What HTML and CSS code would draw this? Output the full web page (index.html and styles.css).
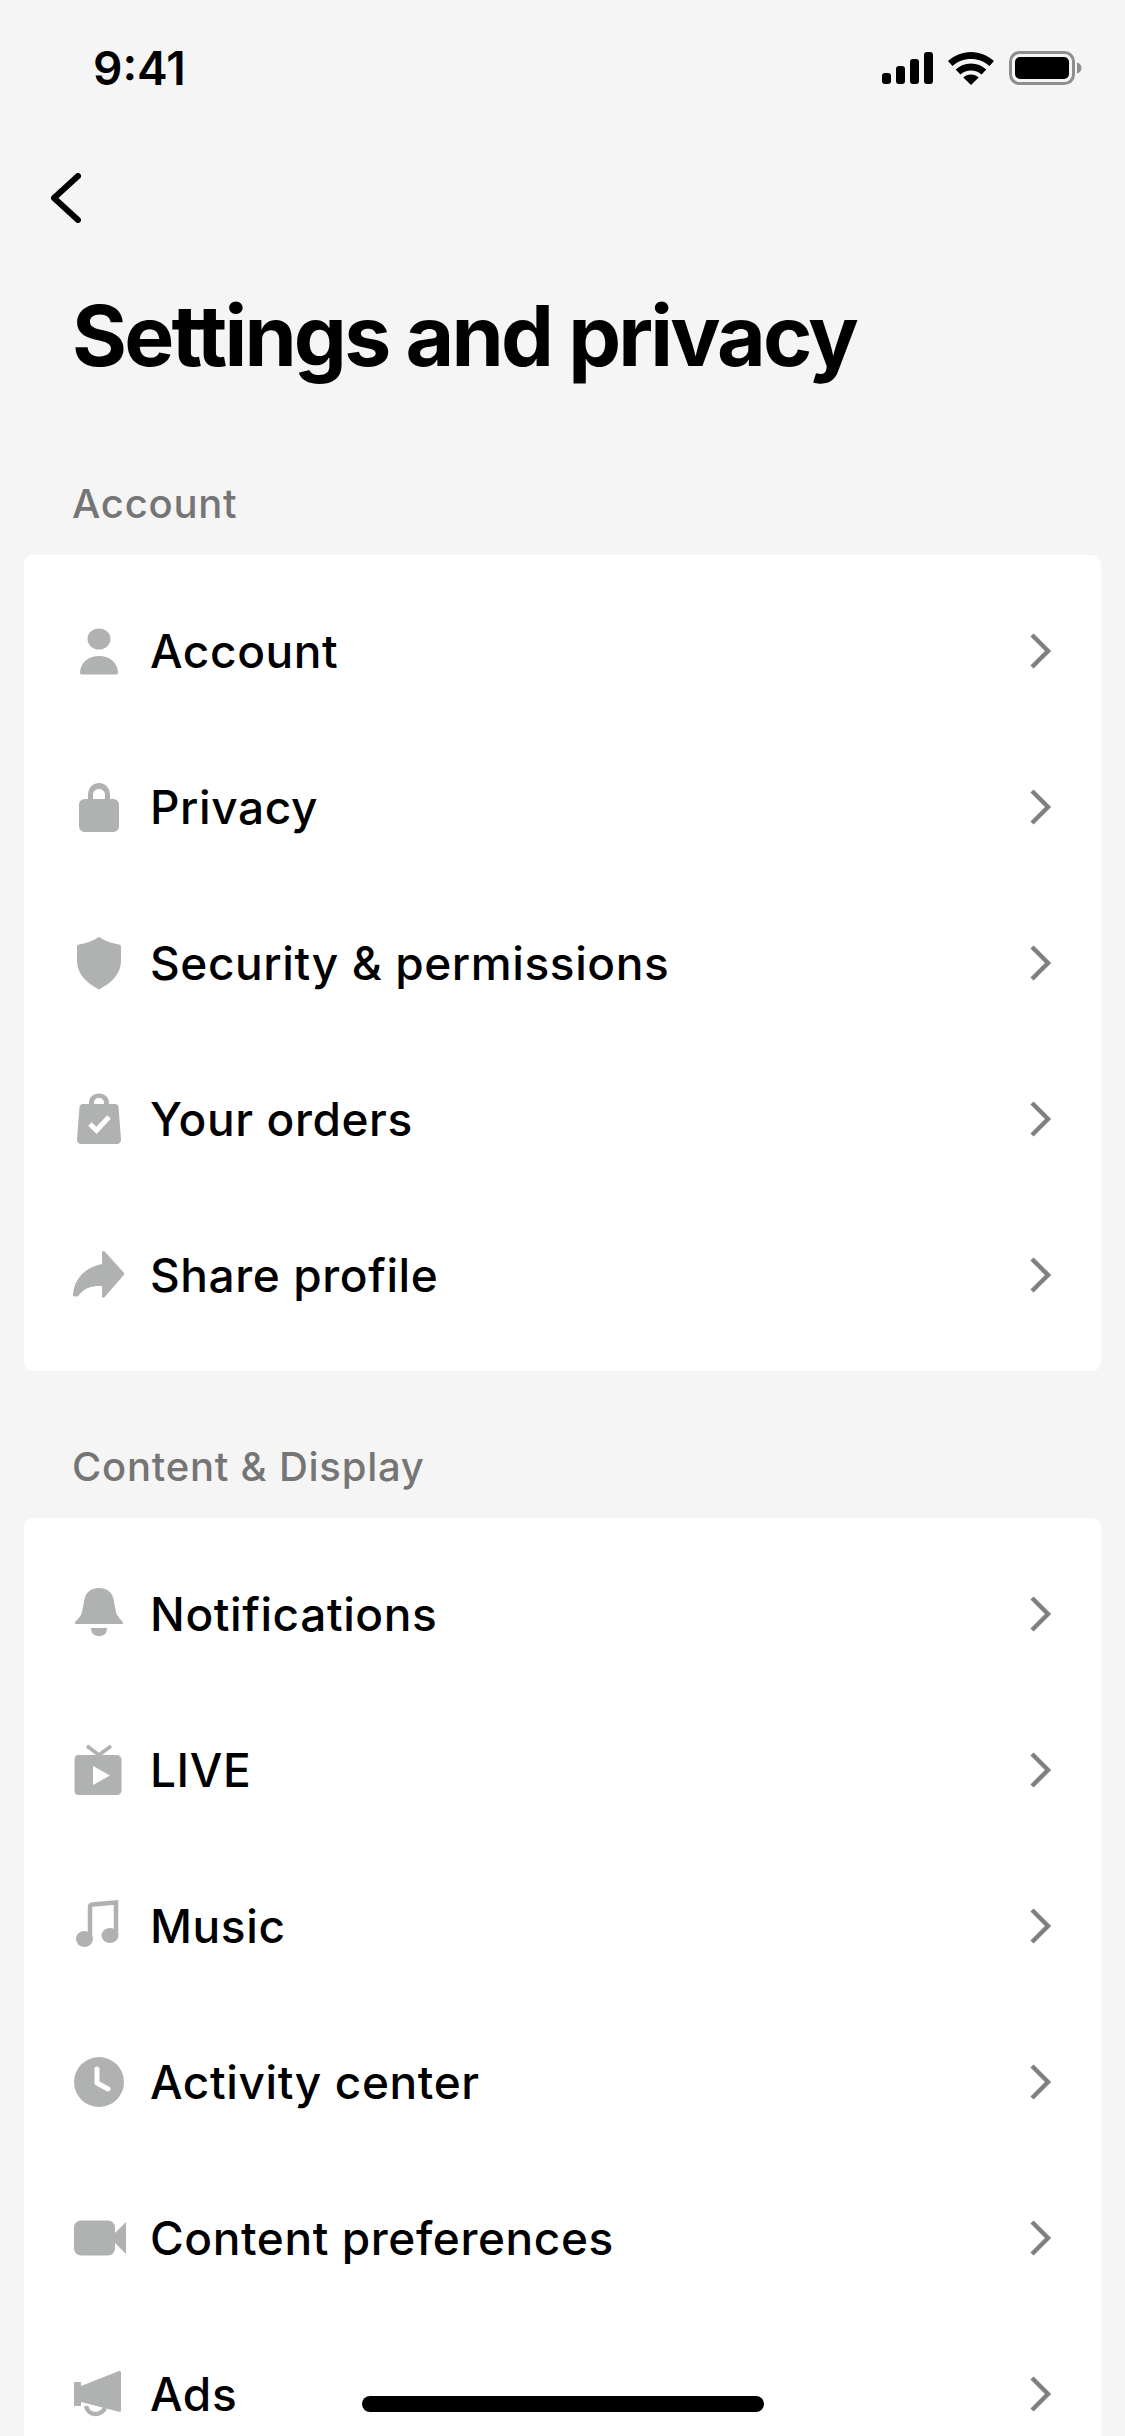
FILE: index.html
```html
<!DOCTYPE html>
<html lang="en">
<head>
<meta charset="utf-8">
<title>Settings and privacy</title>
<link rel="stylesheet" href="styles.css">
</head>
<body>
<div class="screen">
  <header class="status">
    <span class="time">9:41</span>
    <div class="status-icons">
      <svg class="sig" viewBox="0 0 51 32"><rect x="0" y="21" width="9" height="11" rx="3"/><rect x="14" y="14" width="9" height="18" rx="3"/><rect x="28" y="7" width="9" height="25" rx="3"/><rect x="42" y="0" width="9" height="32" rx="3"/></svg>
      <svg class="wifi" viewBox="0 0 46 33"><path d="M23 0C14 0 6.500 3.500 0 9l4.500 5C9.500 9.500 16 7 23 7s13.500 2.500 18.500 7l4.500-5C39.500 3.500 32 0 23 0z"/><path d="M23 11.500c-6 0-11 2.200-15.300 6l4.700 5c3-2.500 6.500-4 10.600-4s7.600 1.500 10.600 4l4.700-5c-4.300-3.800-9.300-6-15.300-6z"/><path d="M23 22.500c-3 0-5.600 1-7.700 2.900L23 33l7.700-7.600c-2.100-1.900-4.700-2.900-7.700-2.900z"/></svg>
      <svg class="batt" viewBox="0 0 73 34"><rect x="1.500" y="1.500" width="63" height="31" rx="9" fill="none" stroke="#8e8e8e" stroke-width="3"/><rect x="6" y="6" width="54" height="22" rx="5"/><path d="M68 11.500c2.800.8 4.500 3 4.500 5.500s-1.700 4.700-4.500 5.500z" fill="#8e8e8e"/></svg>
    </div>
  </header>

  <nav class="nav">
    <svg class="back" viewBox="0 0 32 50"><path d="M29 3 5 25l24 22" fill="none" stroke="#000" stroke-width="6" stroke-linecap="round" stroke-linejoin="round"/></svg>
  </nav>

  <h1 class="title">Settings and privacy</h1>

  <h2 class="section-label">Account</h2>
  <section class="card">
    <div class="row">
      <svg class="ico" viewBox="0 0 60 60"><ellipse cx="30" cy="18" rx="11.500" ry="10.500"/><path d="M11 52c0-10 8-17 19-17s19 7 19 17c0 0 0 1.500-2 1.500H13c-2 0-2-1.500-2-1.500z"/></svg>
      <span class="label">Account</span>
      <svg class="chev" viewBox="0 0 24 38"><path d="m4 3 16 16L4 35" fill="none" stroke="#808080" stroke-width="4.500"/></svg>
    </div>
    <div class="row">
      <svg class="ico" viewBox="0 0 60 60"><path fill-rule="evenodd" d="M19 22v-4c0-7 4.500-12 11-12s11 5 11 12v4h3c3 0 6 2 6 6v21c0 3.500-2.500 6-6 6H16c-3.500 0-6-2.500-6-6V28c0-4 3-6 6-6zm5 0h12v-4c0-3.500-2.500-6-6-6s-6 2.500-6 6z"/></svg>
      <span class="label">Privacy</span>
      <svg class="chev" viewBox="0 0 24 38"><path d="m4 3 16 16L4 35" fill="none" stroke="#808080" stroke-width="4.500"/></svg>
    </div>
    <div class="row">
      <svg class="ico" viewBox="0 0 60 60"><path d="M30 4c6 4 14 6.500 20 7.500 1.500.3 2 1 2 2.500v14c0 13-10 22-21 28-.7.400-1.300.400-2 0C18 50 8 41 8 28V14c0-1.500.5-2.200 2-2.500C16 10.500 24 8 30 4z"/></svg>
      <span class="label">Security &amp; permissions</span>
      <svg class="chev" viewBox="0 0 24 38"><path d="m4 3 16 16L4 35" fill="none" stroke="#808080" stroke-width="4.500"/></svg>
    </div>
    <div class="row">
      <svg class="ico" viewBox="0 0 60 60"><path fill-rule="evenodd" d="M20 15v-1c0-6 4.500-9.500 10-9.500S40 8 40 14v1h6c2 0 3.200 1 3.500 3L52 50c.3 3-1.700 5-4.500 5h-35C9.700 55 7.700 53 8 50l2.500-32c.3-2 1.500-3 3.500-3zm5 0h10v-1c0-3-2-5-5-5s-5 2-5 5z"/><path d="m21 35 6.500 6.500L40 28" fill="none" stroke="#fff" stroke-width="5"/></svg>
      <span class="label">Your orders</span>
      <svg class="chev" viewBox="0 0 24 38"><path d="m4 3 16 16L4 35" fill="none" stroke="#808080" stroke-width="4.500"/></svg>
    </div>
    <div class="row">
      <svg class="ico" viewBox="0 0 60 60"><path d="M33 7.500c0-1.500 1.500-2 2.500-1.200l19 21c1 1 1 2 0 3l-19 22c-1 1-2.500.5-2.500-1V41c-9-.5-17 1-23 9-1.500 2-6 2-6 0C5 33 17 22 33 19z"/></svg>
      <span class="label">Share profile</span>
      <svg class="chev" viewBox="0 0 24 38"><path d="m4 3 16 16L4 35" fill="none" stroke="#808080" stroke-width="4.500"/></svg>
    </div>
  </section>

  <h2 class="section-label second">Content &amp; Display</h2>
  <section class="card">
    <div class="row">
      <svg class="ico" viewBox="0 0 60 60"><path d="M30 4c9 0 14 5 15 14l2 10c.5 3 3 6 6 9 2 2 1.500 3-1 3H8c-2.500 0-3-1-1-3 3-3 5.500-6 6-9l2-10C16 9 21 4 30 4z"/><path d="M22 44h16c0 6-3.500 8-8 8s-8-2-8-8z"/></svg>
      <span class="label">Notifications</span>
      <svg class="chev" viewBox="0 0 24 38"><path d="m4 3 16 16L4 35" fill="none" stroke="#808080" stroke-width="4.500"/></svg>
    </div>
    <div class="row">
      <svg class="ico" viewBox="0 0 60 60"><path d="m18 6 12 9 12-9" fill="none" stroke="#b0b2b2" stroke-width="3.500"/><path d="M9.500 15h38c3 0 5 2 5 5v30c0 3-2 5-5 5h-38c-3 0-4-2-4-5V20c0-3 1-5 4-5z"/><path d="M24 26v19l17-9.500z" fill="#fff"/></svg>
      <span class="label">LIVE</span>
      <svg class="chev" viewBox="0 0 24 38"><path d="m4 3 16 16L4 35" fill="none" stroke="#808080" stroke-width="4.500"/></svg>
    </div>
    <div class="row">
      <svg class="ico" viewBox="0 0 60 60"><path d="M21 44V11c0-1.500.8-2.300 2.500-2.500L47 6.500V39" fill="none" stroke="#b0b2b2" stroke-width="4.500"/><ellipse cx="15.500" cy="43" rx="8.500" ry="8"/><ellipse cx="41" cy="39.500" rx="8.500" ry="7.500"/></svg>
      <span class="label">Music</span>
      <svg class="chev" viewBox="0 0 24 38"><path d="m4 3 16 16L4 35" fill="none" stroke="#808080" stroke-width="4.500"/></svg>
    </div>
    <div class="row">
      <svg class="ico" viewBox="0 0 60 60"><circle cx="30" cy="30" r="25"/><path d="M28 17v14l11 6" fill="none" stroke="#fff" stroke-width="5" stroke-linecap="round" stroke-linejoin="round"/></svg>
      <span class="label">Activity center</span>
      <svg class="chev" viewBox="0 0 24 38"><path d="m4 3 16 16L4 35" fill="none" stroke="#808080" stroke-width="4.500"/></svg>
    </div>
    <div class="row">
      <svg class="ico" viewBox="0 0 60 60"><rect x="5" y="12.500" width="41" height="35" rx="7"/><path d="M46 25 57 14v32L46 35z"/></svg>
      <span class="label">Content preferences</span>
      <svg class="chev" viewBox="0 0 24 38"><path d="m4 3 16 16L4 35" fill="none" stroke="#808080" stroke-width="4.500"/></svg>
    </div>
    <div class="row">
      <svg class="ico" viewBox="0 0 60 60"><path d="M5 18h7v4l38-15c1-.4 2 .2 2 1.500V46c0 1.500-1 2-2 1.800L12 38v4H5z"/><path d="M17 42c1 5 5 8 9 8 5 0 8-2 10-6" fill="none" stroke="#b0b2b2" stroke-width="4.500"/></svg>
      <span class="label">Ads</span>
      <svg class="chev" viewBox="0 0 24 38"><path d="m4 3 16 16L4 35" fill="none" stroke="#808080" stroke-width="4.500"/></svg>
    </div>
  </section>

  <div class="home"></div>
</div>
</body>
</html>
```

FILE: styles.css
```css
* { box-sizing: border-box; }
html, body { margin: 0; padding: 0; }
body { background: #f5f5f5; font-family: Inter, "Liberation Sans", sans-serif; color: #000; }
.screen { position: relative; width: 1125px; height: 2436px; overflow: hidden; background: #f5f5f5; }

.status { display: flex; justify-content: space-between; align-items: center; height: 136px; padding: 0 43px 0 93px; }
.time { font-size: 46px; font-weight: 600; letter-spacing: 0; line-height: 1; }
.status-icons { display: flex; align-items: center; gap: 15px; }
.status-icons svg { display: block; }
.sig { width: 51px; height: 32px; }
.wifi { width: 46px; height: 33px; }
.batt { width: 73px; height: 34px; }

.nav { display: flex; align-items: center; height: 124px; padding-left: 49px; }
.back { width: 32px; height: 50px; display: block; }

.title { margin: 25px 0 0; padding-left: 72px; font-size: 84px; font-weight: 700; letter-spacing: -2.800px; line-height: 102px; height: 102px; }

.section-label { margin: 93px 0 0; padding-left: 72px; font-size: 40px; font-weight: 500; line-height: 48px; letter-spacing: .75px; color: #757575; height: 75px; }
.section-label.second { margin-top: 72px; }

.card { margin: 0 24px; padding: 18px 0; background: #fff; border-radius: 9px; }
.row { display: flex; align-items: center; height: 156px; padding: 0 45px; }
.ico { width: 60px; height: 60px; flex: none; fill: #b0b2b2; display: block; }
.label { flex: 1; margin-left: 21px; font-size: 46px; font-weight: 500; line-height: 56px; letter-spacing: .6px; }
.chev { width: 24px; height: 38px; flex: none; margin-right: 4px; display: block; }

.home { position: absolute; left: 362px; top: 2396px; width: 402px; height: 16px; border-radius: 8px; background: #000; }
```
